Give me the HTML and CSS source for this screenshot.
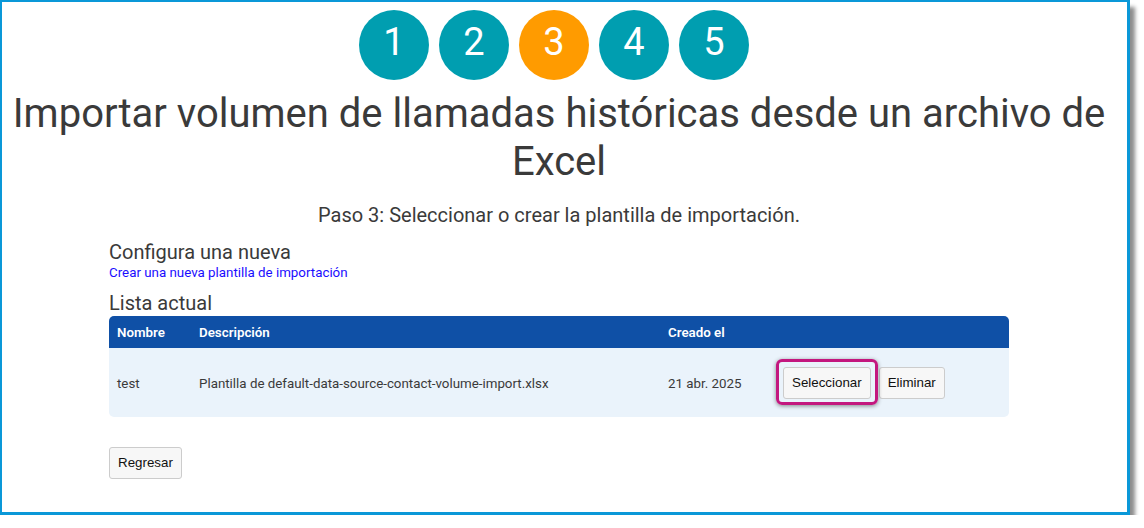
FILE: index.html
```html
<!DOCTYPE html>
<html lang="es">
<head>
<meta charset="utf-8">
<title>Importar volumen de llamadas</title>
<link rel="stylesheet" href="styles.css">
</head>
<body>
<div class="frame">
  <div class="page">
    <div class="steps">
      <div class="step">1</div>
      <div class="step">2</div>
      <div class="step step-active">3</div>
      <div class="step">4</div>
      <div class="step">5</div>
    </div>
    <h1 class="title">Importar volumen de llamadas históricas desde un archivo de Excel</h1>
    <h5 class="subtitle">Paso 3: Seleccionar o crear la plantilla de importación.</h5>
    <div class="content">
      <h5 class="section-title">Configura una nueva</h5>
      <a class="new-link" href="#">Crear una nueva plantilla de importación</a>
      <h5 class="section-title list-title">Lista actual</h5>
      <div class="table">
        <div class="thead">
          <div class="cell">Nombre</div>
          <div class="cell">Descripción</div>
          <div class="cell">Creado el</div>
          <div class="cell"></div>
        </div>
        <div class="trow">
          <div class="cell">test</div>
          <div class="cell">Plantilla de default-data-source-contact-volume-import.xlsx</div>
          <div class="cell">21 abr. 2025</div>
          <div class="cell actions">
            <span class="highlight"><button class="btn">Seleccionar</button></span>
            <button class="btn">Eliminar</button>
          </div>
        </div>
      </div>
      <button class="btn back-btn">Regresar</button>
    </div>
  </div>
</div>
</body>
</html>
```

FILE: styles.css
```css
html, body {
  margin: 0;
  padding: 0;
  background: #ffffff;
}

body {
  font-family: Roboto, "Liberation Sans", Arial, sans-serif;
  color: #3a3a3a;
}

.frame {
  box-sizing: border-box;
  width: 1130px;
  height: 515px;
  border: 3px solid #0a98d8;
  border-top-width: 2px;
  border-left-width: 2px;
  background: #ffffff;
  box-shadow: 6px 6px 4px -1px rgba(0, 0, 0, 0.45);
}

.page {
  padding: 8px 11px 0 0;
}

.steps {
  display: flex;
  justify-content: center;
  gap: 10px;
  padding-right: 10px;
}

.step {
  width: 70px;
  height: 70px;
  border-radius: 50%;
  background: #009eb0;
  color: #ffffff;
  font-size: 38px;
  line-height: 64px;
  text-align: center;
}

.step-active {
  background: #ff9b00;
}

.title {
  margin: 10px 0 0;
  font-size: 40px;
  font-weight: 400;
  line-height: 48px;
  text-align: center;
  color: #3a3a3a;
}

.subtitle {
  margin: 17px 0 0;
  font-size: 20px;
  font-weight: 400;
  line-height: 24px;
  text-align: center;
  color: #3a3a3a;
}

.content {
  width: 900px;
  margin: 0 auto;
}

.section-title {
  margin: 13px 0 0;
  font-size: 20px;
  font-weight: 400;
  line-height: 24px;
  color: #3a3a3a;
}

.list-title {
  margin-top: 9px;
}

.new-link {
  display: block;
  font-size: 13.33px;
  line-height: 18px;
  color: #1a0dff;
  text-decoration: none;
}

.table {
  margin-top: 1px;
  font-size: 13.33px;
}

.thead,
.trow {
  display: grid;
  grid-template-columns: 82px 469px 115px 1fr;
  align-items: center;
}

.thead {
  height: 32px;
  padding-top: 1px;
  box-sizing: border-box;
  background: #0f50a6;
  color: #ffffff;
  font-weight: 600;
  border-radius: 5px 5px 0 0;
}

.trow {
  height: 69px;
  padding-top: 2px;
  box-sizing: border-box;
  background: #eaf3fb;
  color: #3a3a3a;
  border-radius: 0 0 5px 5px;
}

.cell {
  padding: 0 8px;
  line-height: 18px;
}

.actions {
  display: flex;
  align-items: center;
  gap: 8px;
  padding-bottom: 2px;
}

.btn {
  font-family: "Liberation Sans", Arial, sans-serif;
  font-size: 13.333px;
  line-height: 16px;
  padding: 7px 8px;
  color: #111111;
  background: #f7f7f7;
  border: 1px solid #cccccc;
  border-radius: 3px;
}

.highlight {
  position: relative;
  display: inline-flex;
}

.highlight::before {
  content: "";
  position: absolute;
  top: -8px;
  left: -7px;
  right: -7px;
  bottom: -6px;
  border: 3px solid #c3177f;
  border-radius: 6px;
  box-shadow: 0 1px 4px rgba(0, 0, 0, 0.45);
  pointer-events: none;
}

.back-btn {
  margin-top: 30px;
}
```
